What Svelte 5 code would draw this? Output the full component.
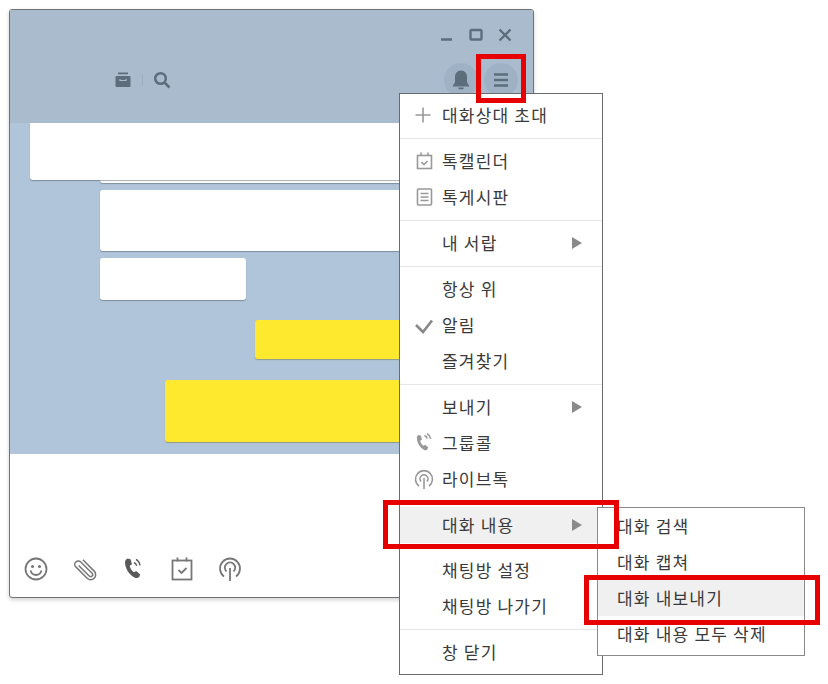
<script>
	const menu = [
		[{ label: '대화상대 초대', icon: 'plus' }],
		[
			{ label: '톡캘린더', icon: 'calendar' },
			{ label: '톡게시판', icon: 'board' }
		],
		[{ label: '내 서랍', arrow: true }],
		[
			{ label: '항상 위' },
			{ label: '알림', icon: 'check' },
			{ label: '즐겨찾기' }
		],
		[
			{ label: '보내기', arrow: true },
			{ label: '그룹콜', icon: 'call' },
			{ label: '라이브톡', icon: 'live' }
		],
		[{ label: '대화 내용', arrow: true, active: true }],
		[{ label: '채팅방 설정' }, { label: '채팅방 나가기' }],
		[{ label: '창 닫기' }]
	];

	const submenu = [
		{ label: '대화 검색' },
		{ label: '대화 캡쳐' },
		{ label: '대화 내보내기', active: true },
		{ label: '대화 내용 모두 삭제' }
	];
</script>

<div class="page">
	<div class="window">
		<header>
			<div class="controls">
				<svg width="14" height="14" viewBox="0 0 14 14"><path d="M1 11.500h11" /></svg>
				<svg width="14" height="14" viewBox="0 0 14 14"><rect x="1.500" y="2" width="11" height="9.500" rx="1" /></svg>
				<svg width="14" height="14" viewBox="0 0 14 14"><path d="M1.500 1.500l11 11M12.500 1.500l-11 11" /></svg>
			</div>
			<div class="tools">
				<div class="left-tools">
					<svg class="small" width="18" height="18" viewBox="0 0 18 18">
						<path class="fill" d="M4 1.500h10v1.800H4zM2.500 5h13a1 1 0 0 1 1 1v9a1 1 0 0 1-1 1h-13a1 1 0 0 1-1-1V6a1 1 0 0 1 1-1z" />
						<path class="cut" d="M6 8v1.500h6V8" />
					</svg>
					<span class="bar"></span>
					<svg class="small" width="18" height="18" viewBox="0 0 18 18">
						<circle cx="7.500" cy="7.500" r="5.300" />
						<path d="M11.500 11.500l5 5" />
					</svg>
				</div>
				<div class="right-tools">
					<div class="round">
						<svg width="20" height="22" viewBox="0 0 20 22">
							<path class="fill" d="M10 1.500c4 0 6 3 6 6.500v5l2.500 4.500h-17L4 13V8c0-3.500 2-6.500 6-6.500zM7.500 18.500h5v1.800h-5z" />
						</svg>
					</div>
					<div class="round">
						<svg width="20" height="20" viewBox="0 0 20 20"><path d="M3 4.500h14M3 10h14M3 15.500h14" /></svg>
					</div>
				</div>
			</div>
		</header>

		<section class="chat">
			<div class="stack">
				<div class="bubble behind"></div>
				<div class="bubble first"></div>
			</div>
			<div class="bubble wide"></div>
			<div class="bubble short"></div>
			<div class="bubble mine one"></div>
			<div class="bubble mine two"></div>
		</section>

		<footer>
			<svg width="26" height="26" viewBox="0 0 26 26">
				<circle cx="13" cy="13" r="10.500" />
				<circle class="fill" cx="9.500" cy="10.500" r="1.500" />
				<circle class="fill" cx="16.500" cy="10.500" r="1.500" />
				<path d="M7.500 14.500c1 3.500 3 4.500 5.500 4.500s4.500-1 5.500-4.500" />
			</svg>
			<svg class="clip" width="26" height="26" viewBox="0 0 26 26">
				<path transform="rotate(-45 13 13)" d="M18 5v16a5 5 0 0 1-10 0V5a3.500 3.500 0 0 1 7 0v16a2 2 0 0 1-4 0V6" />
			</svg>
			<svg width="26" height="26" viewBox="0 0 26 26">
				<path class="fill dark" d="M7.500 2.500l3 .8 1.500 5-2.300 1.500c.6 2.700 2 4.800 4.300 6.500l2.200-1.300 4 3.400-1 2.700c-1 1.100-3 1.400-4.700.4C9 18.500 5.200 12.500 5 6.500c0-1.800 1-3.300 2.500-4z" />
				<path class="thin dark" d="M14 6.500c1.500.6 2.300 1.700 2.700 3.200M16 3.500c2.200 1 3.500 3 4 5.800" />
			</svg>
			<svg width="26" height="26" viewBox="0 0 26 26">
				<rect x="3.500" y="4.500" width="19" height="19" />
				<path d="M8.500 1.500v4M17.500 1.500v4M9.500 14l3 3 5-5" />
			</svg>
			<svg width="26" height="26" viewBox="0 0 26 26">
				<path d="M7 20.500a10 10 0 1 1 12 0" />
				<path d="M9.500 15.500a5.200 5.200 0 1 1 7 0" />
				<path d="M13 12v13" />
			</svg>
		</footer>
	</div>

	<nav class="menu">
		{#each menu as group, i}
			{#if i > 0}<div class="sep"></div>{/if}
			{#each group as item}
				<div class="item" class:active={item.active}>
					<span class="icon">
						{#if item.icon === 'plus'}
							<svg width="20" height="18" viewBox="0 0 20 18"><path d="M10 1.500v15M2.500 9h15" /></svg>
						{:else if item.icon === 'calendar'}
							<svg width="20" height="18" viewBox="0 0 20 18">
								<rect x="4.500" y="3.500" width="14" height="13" />
								<path d="M8 .500v3.500M15 .500v3.500M8.500 10l2.500 2.500 3.500-3.500" />
							</svg>
						{:else if item.icon === 'board'}
							<svg width="20" height="18" viewBox="0 0 20 18">
								<rect x="4.500" y="1" width="14" height="16" rx="1" />
								<path d="M7.500 5.500h8M7.500 9h8M7.500 12.500h8" />
							</svg>
						{:else if item.icon === 'check'}
							<svg width="20" height="18" viewBox="0 0 20 18"><path class="heavy" d="M3 9l7 7L19 4.500" /></svg>
						{:else if item.icon === 'call'}
							<svg width="20" height="20" viewBox="0 0 20 20">
								<path class="fill" d="M5.500 2l2.500.7 1 3.800-1.800 1.200c.4 2 1.500 3.700 3.200 5l1.800-1 3 2.600-.8 2.200c-.8.900-2.300 1.100-3.600.3C7 14.500 4 10 3.900 5c0-1.300.5-2.400 1.600-3z" />
								<path d="M11.500 2.500c1.500.6 2.300 1.700 2.700 3M14 .800c2 1 3.300 2.700 3.800 5" />
							</svg>
						{:else if item.icon === 'live'}
							<svg width="20" height="20" viewBox="0 0 20 20">
								<path d="M6 17a8.500 8.500 0 1 1 10 0" />
								<path d="M8 12.500a4 4 0 1 1 6 0" />
								<path d="M11 9v11" />
							</svg>
						{/if}
					</span>
					<span class="label">{item.label}</span>
					{#if item.arrow}<span class="arrow"></span>{/if}
				</div>
			{/each}
		{/each}
	</nav>

	<nav class="menu sub">
		{#each submenu as item}
			<div class="item" class:active={item.active}>
				<span class="label">{item.label}</span>
			</div>
		{/each}
	</nav>

	<div class="mark mark-menu"></div>
	<div class="mark mark-row"></div>
	<div class="mark mark-sub"></div>
</div>

<style>
	:global(body) {
		background: #fff;
	}

	.page {
		position: relative;
		width: 828px;
		height: 684px;
		padding: 9px 0 0 9px;
		box-sizing: border-box;
		overflow: hidden;
		font-family: 'Noto Sans CJK KR', 'Noto Sans', sans-serif;
	}

	svg {
		display: block;
		fill: none;
	}

	.window {
		width: 525px;
		height: 589px;
		box-sizing: border-box;
		display: flex;
		flex-direction: column;
		border: 1px solid #6f7377;
		border-radius: 3px;
		box-shadow: 0 2px 4px rgba(0, 0, 0, 0.18);
		overflow: hidden;
		background: #fff;
	}

	header {
		height: 113px;
		flex: none;
		box-sizing: border-box;
		background: #a9bbcd;
		padding: 18px 21px 0 0;
	}

	header svg {
		stroke: #5d6d7c;
	}

	.controls {
		display: flex;
		justify-content: flex-end;
		gap: 15px;
	}

	.controls svg {
		stroke-width: 2.400;
	}

	.tools {
		display: flex;
		justify-content: space-between;
		align-items: center;
		margin-top: 21px;
		padding-left: 104px;
		margin-right: -6px;
	}

	.left-tools {
		display: flex;
		align-items: center;
		gap: 10px;
	}

	.small {
		stroke-width: 2.500;
	}

	.fill {
		fill: #5d6d7c;
		stroke: none;
	}

	.cut {
		stroke: #a9bbcd;
		stroke-width: 1.200;
	}

	.bar {
		width: 1px;
		height: 12px;
		background: #9aacbe;
	}

	.right-tools {
		display: flex;
		gap: 6px;
	}

	.round {
		width: 34px;
		height: 34px;
		border-radius: 50%;
		background: #9fb2c5;
		display: flex;
		align-items: center;
		justify-content: center;
	}

	.round svg {
		stroke-width: 2.500;
	}

	.chat {
		height: 331px;
		flex: none;
		box-sizing: border-box;
		background: #b0c5d9;
		display: flex;
		flex-direction: column;
	}

	.bubble {
		background: #fff;
		border-radius: 3px;
		box-shadow: 0 1px 1px rgba(60, 75, 90, 0.45);
	}

	.stack {
		display: grid;
		height: 60px;
		flex: none;
	}

	.first {
		grid-area: 1 / 1;
		height: 57px;
		margin: 0 20px;
		border-radius: 0 0 3px 3px;
	}

	.behind {
		grid-area: 1 / 1;
		height: 60px;
		margin: 0 20px 0 90px;
		border-radius: 0 0 3px 3px;
	}

	.wide {
		height: 61px;
		margin: 7px 20px 0 90px;
	}

	.short {
		width: 146px;
		height: 42px;
		margin: 7px 0 0 90px;
	}

	.mine {
		background: #ffe92f;
		box-shadow: 0 1px 1px rgba(110, 100, 40, 0.45);
	}

	.one {
		height: 39px;
		margin: 20px 20px 0 245px;
	}

	.two {
		height: 62px;
		margin: 21px 20px 0 155px;
	}

	footer {
		flex: 1;
		display: flex;
		align-items: flex-end;
		gap: 22.500px;
		padding: 0 0 15px 13px;
	}

	footer svg {
		stroke: #777;
		stroke-width: 1.800;
	}

	footer .fill {
		fill: #777;
	}

	footer .dark {
		fill: #5a5a5a;
		stroke: none;
	}

	footer .thin {
		fill: none;
		stroke: #5a5a5a;
		stroke-width: 1.400;
	}

	.clip {
		overflow: visible;
		stroke-width: 1.500;
	}

	.menu {
		position: absolute;
		left: 399px;
		top: 93px;
		width: 204px;
		height: 582px;
		box-sizing: border-box;
		padding-top: 3px;
		background: #fff;
		border: 1px solid #6b6b6b;
		z-index: 2;
	}

	.sub {
		left: 597px;
		top: 507px;
		width: 208px;
		height: 149px;
		padding-top: 0;
		border-color: #8a8a8a;
		z-index: 3;
	}

	.item {
		height: 36px;
		display: flex;
		align-items: center;
		color: #3a3a3a;
		font-size: 17px;
		letter-spacing: 1.200px;
		padding-left: 13px;
		position: relative;
	}

	.label {
		margin-top: -2px;
	}

	.sub .item {
		padding-left: 19px;
	}

	.item.active {
		background: #f0f0f0;
		margin-bottom: -1px;
	}

	.sub .item.active {
		margin-bottom: 0;
	}

	.icon {
		width: 29px;
		flex: none;
		display: flex;
		align-items: center;
	}

	.icon svg {
		stroke: #999;
		stroke-width: 1.600;
		overflow: visible;
	}

	.icon .fill {
		fill: #999;
		stroke: none;
	}

	.icon .heavy {
		stroke: #888;
		stroke-width: 2.600;
	}

	.arrow {
		position: absolute;
		right: 20px;
		top: 12px;
		border-style: solid;
		border-width: 6px 0 6px 10px;
		border-color: transparent transparent transparent #8a8a8a;
	}

	.sep {
		height: 1px;
		margin: 5px 0 4px;
		background: #e6e6e6;
	}

	.mark {
		position: absolute;
		box-sizing: border-box;
		border: 5px solid #e60000;
		z-index: 4;
	}

	.mark-menu {
		left: 476px;
		top: 54px;
		width: 50px;
		height: 49px;
	}

	.mark-row {
		left: 383px;
		top: 500px;
		width: 236px;
		height: 49px;
	}

	.mark-sub {
		left: 584px;
		top: 575px;
		width: 236px;
		height: 50px;
	}
</style>
